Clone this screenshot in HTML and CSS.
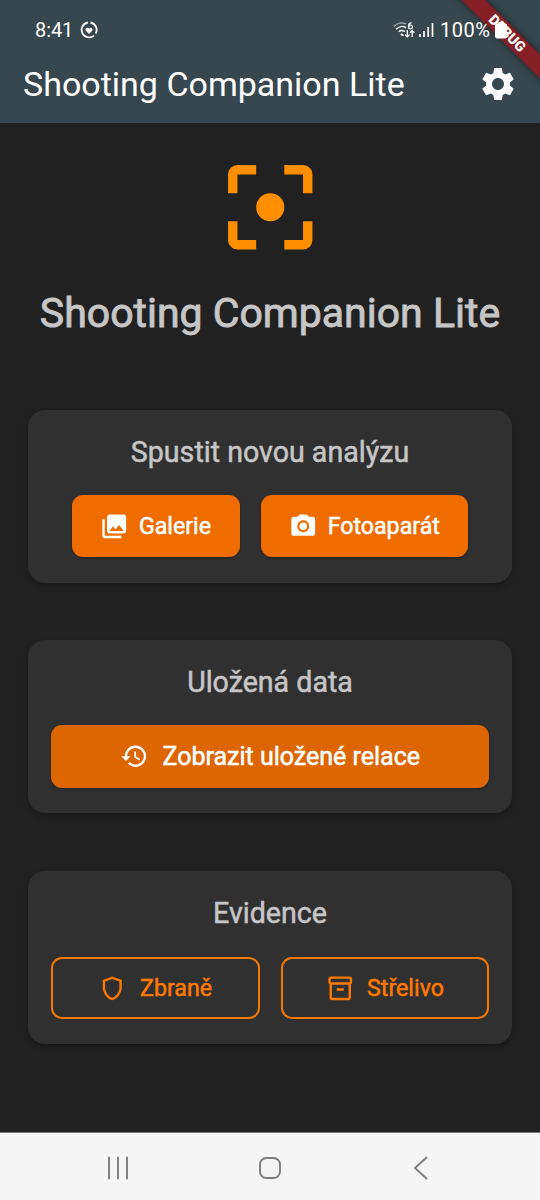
FILE: index.html
```html
<!DOCTYPE html>
<html lang="cs">
<head>
<meta charset="utf-8">
<title>Shooting Companion Lite</title>
<link rel="stylesheet" href="styles.css">
</head>
<body>
<div class="screen">
  <header class="top">
    <div class="debug"><span>DEBUG</span></div>
    <div class="status">
      <span class="time">8:41</span>
      <svg class="health" width="18" height="18" viewBox="0 0 18 18"><path d="M7.800 1.500A7.500 7.500 0 1 0 14 14.600M10.400 1.500A7.500 7.500 0 0 1 15.700 12.500" fill="none" stroke="#fff" stroke-width="1.800"/><path d="M9 13 5.800 9.700C4.500 8 7 5.400 9 7.500c2-2.100 4.500.500 3.200 2.200z" fill="#fff"/></svg>
      <svg class="wifi" width="22" height="18" viewBox="0 0 22 18" fill="none" stroke="#fff" stroke-width="1.400"><path d="M.8 5.500C4 2 9 1 13 3" opacity=".5"/><path d="M3.200 8.200C6 5.200 10 4.800 13 6.800M5.800 10.700c2-1.700 4-1.700 6 0"/><path d="m9 12.200 2.300 2.300-2.300.500-1.800-1.800z" fill="#fff" stroke="none"/><path d="M18.500 1.800c-2 0-3 1.700-3 3.700 0 3 4 3 4 .400 0-2.200-3.200-2.300-3.800-.200" stroke-width="1.300"/><path d="M14.300 9v6.600m-2.200-2 2.200 2.200 2.200-2.200M19.200 16V9.500M17 11.700l2.200-2.200 2.200 2.200" stroke-width="1.300"/></svg>
      <svg class="signal" width="15" height="16" viewBox="0 0 15 16" stroke="#fff" stroke-width="1.700"><path d="M1 12v3M5 9v6M9.200 5v10M13.500 1v14"/></svg>
      <span class="percent">100%</span>
      <svg class="battery" width="12" height="17" viewBox="0 0 12 17"><path d="M3.500 0h5v1.500H10q2 0 2 2V14q0 2.500-2.500 2.500h-7Q0 16.500 0 14V3.500q0-2 2-2h1.500z" fill="#fff"/></svg>
    </div>
    <div class="appbar">
      <h1 class="title">Shooting Companion Lite</h1>
      <svg class="gear" viewBox="0 0 24 24" fill="#fff"><path d="M19.140 12.940c.04-.3.060-.61.060-.94 0-.32-.02-.64-.07-.94l2.030-1.580c.18-.14.230-.41.120-.61l-1.920-3.320c-.12-.22-.37-.29-.59-.22l-2.390.96c-.5-.38-1.030-.7-1.620-.94l-.36-2.540c-.04-.24-.24-.41-.48-.41h-3.840c-.24 0-.43.170-.47.410l-.36 2.540c-.59.240-1.130.570-1.620.940l-2.390-.96c-.22-.08-.47 0-.59.220L2.740 8.870c-.12.210-.08.470.12.610l2.030 1.580c-.05.300-.09.630-.09.940s.02.640.070.940l-2.030 1.580c-.18.140-.23.410-.12.610l1.920 3.320c.12.220.370.290.590.220l2.390-.96c.500.380 1.030.700 1.620.940l.36 2.540c.05.240.240.410.480.410h3.840c.24 0 .44-.17.470-.41l.36-2.540c.59-.24 1.130-.56 1.620-.94l2.390.96c.22.080.47 0 .59-.22l1.920-3.320c.12-.22.070-.47-.12-.61l-2.010-1.580zM12 15.600c-1.980 0-3.600-1.620-3.600-3.600s1.620-3.600 3.600-3.600 3.600 1.620 3.600 3.600-1.620 3.600-3.600 3.600z"/></svg>
    </div>
  </header>
  <main class="content">
    <svg class="focus" viewBox="0 0 24 24" fill="#ff8f00"><path d="M12 9a3 3 0 1 0 0 6 3 3 0 0 0 0-6zM5 15H3v4c0 1.100.9 2 2 2h4v-2H5zM5 5h4V3H5a2 2 0 0 0-2 2v4h2zM19 3h-4v2h4v4h2V5a2 2 0 0 0-2-2zM19 19h-4v2h4a2 2 0 0 0 2-2v-4h-2z"/></svg>
    <h2 class="heading">Shooting Companion Lite</h2>
    <section class="card">
      <h3 class="card-title">Spustit novou analýzu</h3>
      <div class="row">
        <button class="btn gallery"><svg class="icon" viewBox="0 0 24 24"><path d="M22 16V4c0-1.100-.9-2-2-2H8c-1.100 0-2 .9-2 2v12c0 1.100.9 2 2 2h12c1.100 0 2-.9 2-2zm-11-4 2.030 2.710L16 11l4 5H8l3-4zM2 6v14c0 1.100.9 2 2 2h14v-2H4V6H2z"/></svg><span>Galerie</span></button>
        <button class="btn camera"><svg class="icon" viewBox="0 0 24 24"><circle cx="12" cy="12" r="3.200"/><path d="M9 2 7.170 4H4c-1.100 0-2 .9-2 2v12c0 1.100.9 2 2 2h16c1.100 0 2-.9 2-2V6c0-1.100-.9-2-2-2h-3.170L15 2H9zm3 15c-2.760 0-5-2.240-5-5s2.240-5 5-5 5 2.240 5 5-2.240 5-5 5z"/></svg><span>Fotoaparát</span></button>
      </div>
    </section>
    <section class="card">
      <h3 class="card-title">Uložená data</h3>
      <div class="row single">
        <button class="btn sessions"><svg class="icon" viewBox="0 0 24 24"><path d="M13 3a9 9 0 0 0-9 9H1l3.890 3.890.070.140L9 12H6c0-3.870 3.130-7 7-7s7 3.130 7 7-3.130 7-7 7c-1.930 0-3.680-.79-4.940-2.060l-1.420 1.420A9 9 0 1 0 13 3zm-1 5v5l4.280 2.540.720-1.210-3.500-2.080V8H12z"/></svg><span>Zobrazit uložené relace</span></button>
      </div>
    </section>
    <section class="card">
      <h3 class="card-title">Evidence</h3>
      <div class="row outlined">
        <button class="btn outline"><svg class="icon" viewBox="0 0 24 24"><path d="M12 2 4 5v6.090c0 5.050 3.410 9.760 8 10.910 4.590-1.150 8-5.860 8-10.910V5l-8-3zm6 9.090c0 4-2.550 7.700-6 8.830-3.450-1.130-6-4.820-6-8.830v-4.700l6-2.250 6 2.250v4.700z"/></svg><span>Zbraně</span></button>
        <button class="btn outline"><svg class="icon" viewBox="0 0 24 24"><path d="M20 2H4c-1 0-2 .9-2 2v3.010c0 .720.430 1.340 1 1.690V20c0 1.100 1.100 2 2 2h14c.9 0 2-.9 2-2V8.700c.57-.35 1-.97 1-1.690V4c0-1.100-1-2-2-2zm-1 18H5V9h14v11zm1-13H4V4h16v3zM9 12h6v2H9z"/></svg><span>Střelivo</span></button>
      </div>
    </section>
  </main>
  <nav class="nav">
    <svg width="24" height="24" viewBox="0 0 24 24"><path d="M3 1.500v21M12 1.500v21M21 1.500v21"/></svg>
    <svg width="24" height="24" viewBox="0 0 24 24"><rect x="2" y="2" width="20" height="20" rx="6.500"/></svg>
    <svg width="24" height="24" viewBox="0 0 24 24"><path d="M17.500 1.500 6 12l11.500 10.500"/></svg>
  </nav>
</div>
</body>
</html>
```
FILE: styles.css
```css
* { box-sizing: border-box; }
body { margin: 0; background: #212121; font-family: Roboto, sans-serif; }
h1, h2, h3 { margin: 0; white-space: nowrap; }
svg { display: block; flex: none; }
.screen { width: 540px; height: 1200px; display: flex; flex-direction: column; overflow: hidden; background: #212121; }
.top { position: relative; height: 123px; background: #37474f; color: #fff; overflow: hidden; flex: none; }
.status { position: relative; height: 56px; padding: 4px 33px 0 35px; display: flex; align-items: center; font-size: 20px; }
.time { letter-spacing: -.1px; }
.health { margin-left: 7px; }
.wifi { margin-left: auto; }
.signal { margin-left: 4px; }
.percent { margin-left: 6px; letter-spacing: .5px; width: 53px; white-space: nowrap; }
.battery { margin-left: 2px; }
.debug { position: absolute; left: 406.500px; top: 24.500px; width: 200px; height: 17px; background: #861f25; transform: rotate(45deg); box-shadow: 0 0 8px rgba(0,0,0,.5); display: flex; align-items: center; justify-content: center; font-size: 14.300px; line-height: 17px; font-weight: 900; }
.appbar { height: 56px; padding: 0 22px 0 23px; display: flex; align-items: center; justify-content: space-between; }
.title { font-size: 34px; font-weight: 400; line-height: 40px; margin-top: -1px; }
.gear { width: 40px; height: 40px; margin-top: -1px; }
.content { flex: 1; display: flex; flex-direction: column; align-items: center; padding-top: 28px; }
.focus { width: 112.500px; height: 112.500px; }
.heading { margin-top: 22.500px; height: 54px; line-height: 54px; margin-bottom: 69.500px; font-size: 41px; font-weight: 400; color: #c6c6c6; -webkit-text-stroke: .9px #c6c6c6; }
.card { width: 484px; height: 173px; margin-bottom: 57.700px; padding: 21px 23px 0; border-radius: 17px; background: #303030; box-shadow: 0 3px 6px rgba(0,0,0,.28); flex: none; }
.card-title { height: 43px; line-height: 42px; text-align: center; font-size: 28.600px; font-weight: 400; color: #c6c6c6; -webkit-text-stroke: .5px #c6c6c6; }
.row { display: flex; justify-content: center; gap: 21.500px; margin-top: 21.500px; }
.single { margin-top: 21px; }
.btn { height: 62px; border: 0; border-radius: 11px; padding: 0; display: flex; align-items: center; justify-content: center; background: #ef6c00; color: #fff; font: 400 23.200px Roboto, sans-serif; -webkit-text-stroke: .5px currentColor; white-space: nowrap; box-shadow: 0 1px 3px rgba(0,0,0,.3); }
.icon { width: 28.500px; height: 28.500px; fill: currentColor; }
.gallery { width: 167.500px; gap: 10px; }
.camera { width: 207px; gap: 10px; }
.sessions { width: 439px; height: 63px; background: #dd6603; font-size: 25px; gap: 14px; padding-bottom: 1px; }
.outlined { margin-top: 22px; gap: 21px; }
.outline { width: 209px; background: transparent; color: #ff7900; border: 2px solid #f27808; box-shadow: none; gap: 13px; }
.nav { height: 68px; background: #f5f5f5; border-top: 1px solid #777; display: flex; align-items: center; justify-content: space-between; padding: 3px 107px 0 106px; flex: none; }
.nav svg { fill: none; stroke: #7d7d7d; stroke-width: 1.900; stroke-linecap: round; }
```
